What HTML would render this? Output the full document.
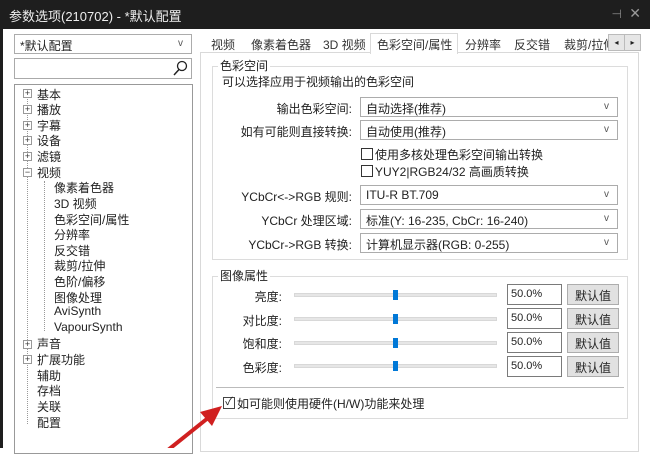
<!DOCTYPE html>
<html><head><meta charset="utf-8"><style>
*{box-sizing:border-box;margin:0;padding:0}
body{width:650px;height:448px;overflow:hidden;background:#fff;font-family:"Liberation Sans","Microsoft YaHei","Noto Sans CJK SC",sans-serif;font-size:12px;color:#222;position:relative}
.a{position:absolute;white-space:nowrap}
.title{left:0;top:0;width:650px;height:29px;background:#1e1e1e;color:#eee;font-size:13px;padding:6px 0 0 9px}
.lb{left:0;top:29px;width:3px;height:419px;background:#1e1e1e}
.dd{border:1px solid #acacac;background:#fff;height:20px;padding:2px 0 0 5px}
.dd:after{content:"v";position:absolute;right:8px;top:3px;font-size:10px;color:#555}
.box{border:1px solid #828790;background:#fff}
.tr{left:37px;font-size:12px}
.sub{left:54px}
.pm{position:absolute;width:9px;height:9px;border:1px solid #999;font-size:9px;line-height:7px;text-align:center;color:#333;background:#fff}
.tab{top:36px;font-size:12px;color:#333}
.grp{border:1px solid #dcdcdc}
.lab{text-align:right;font-size:12px}
.cb{width:12px;height:12px;border:1px solid #333;background:#fff}
.sl{height:4px;background:#e6e6e6;border:1px solid #d8d8d8;left:294px;width:203px}
.th{width:5px;height:10px;background:#0078d7;left:393px}
.ed{left:507px;width:55px;height:21px;border:1px solid #7a7a7a;padding:3px 0 0 3px;font-size:11px}
.bt{left:567px;width:52px;height:21px;border:1px solid #adadad;background:#e1e1e1;text-align:center;padding-top:2px}
</style></head><body>
<div class="a title">参数选项(210702) - *默认配置</div>
<div class="a" style="right:28px;top:7px;color:#888;font-size:12px">⊣</div>
<div class="a" style="right:9px;top:5px;color:#999;font-size:14px">✕</div>
<div class="a lb"></div>

<div class="a dd" style="left:14px;top:34px;width:178px">*默认配置</div>
<div class="a box" style="left:14px;top:58px;width:178px;height:21px;border-color:#aaa"></div>
<svg class="a" style="left:172px;top:60px" width="16" height="16"><circle cx="10" cy="6" r="4.5" fill="none" stroke="#222" stroke-width="1.3"/><line x1="7" y1="9.5" x2="2" y2="15" stroke="#222" stroke-width="1.5"/></svg>
<div class="a box" style="left:14px;top:84px;width:179px;height:370px;border-color:#999"></div>
<div class="a" style="left:27px;top:96px;height:328px;border-left:1px dotted #999"></div>
<div class="a" style="left:44px;top:181px;height:150px;border-left:1px dotted #999"></div>
<div class="pm" style="left:23px;top:89px">+</div><div class="a tr" style="top:86px">基本</div>
<div class="pm" style="left:23px;top:105px">+</div><div class="a tr" style="top:101px">播放</div>
<div class="pm" style="left:23px;top:121px">+</div><div class="a tr" style="top:117px">字幕</div>
<div class="pm" style="left:23px;top:136px">+</div><div class="a tr" style="top:132px">设备</div>
<div class="pm" style="left:23px;top:152px">+</div><div class="a tr" style="top:148px">滤镜</div>
<div class="pm" style="left:23px;top:168px">−</div><div class="a tr" style="top:164px">视频</div>
<div class="a tr sub" style="top:179px">像素着色器</div>
<div class="a tr sub" style="top:195px">3D 视频</div>
<div class="a tr sub" style="top:211px">色彩空间/属性</div>
<div class="a tr sub" style="top:226px">分辨率</div>
<div class="a tr sub" style="top:242px">反交错</div>
<div class="a tr sub" style="top:257px">裁剪/拉伸</div>
<div class="a tr sub" style="top:273px">色阶/偏移</div>
<div class="a tr sub" style="top:289px">图像处理</div>
<div class="a tr sub" style="top:304px">AviSynth</div>
<div class="a tr sub" style="top:320px">VapourSynth</div>
<div class="pm" style="left:23px;top:340px">+</div><div class="a tr" style="top:335px">声音</div>
<div class="pm" style="left:23px;top:355px">+</div><div class="a tr" style="top:351px">扩展功能</div>
<div class="a tr" style="top:367px">辅助</div>
<div class="a tr" style="top:382px">存档</div>
<div class="a tr" style="top:398px">关联</div>
<div class="a tr" style="top:414px">配置</div>

<div class="a" style="left:200px;top:52px;width:439px;height:400px;border:1px solid #d9d9d9"></div>
<div class="a" style="left:370px;top:33px;width:88px;height:21px;border:1px solid #d9d9d9;border-bottom:none;background:#fff"></div>
<div class="a tab" style="left:211px">视频</div>
<div class="a tab" style="left:251px">像素着色器</div>
<div class="a tab" style="left:323px">3D 视频</div>
<div class="a tab" style="left:377px">色彩空间/属性</div>
<div class="a tab" style="left:465px">分辨率</div>
<div class="a tab" style="left:514px">反交错</div>
<div class="a tab" style="left:564px">裁剪/拉伸</div>
<div class="a" style="left:608px;top:34px;width:17px;height:17px;background:#e6e6e6;border:1px solid #bbb;font-size:8px;text-align:center;line-height:15px">◂</div>
<div class="a" style="left:624px;top:34px;width:17px;height:17px;background:#e6e6e6;border:1px solid #bbb;font-size:8px;text-align:center;line-height:15px">▸</div>

<div class="a grp" style="left:212px;top:66px;width:416px;height:194px"></div>
<div class="a" style="left:218px;top:57px;background:#fff;padding:0 2px">色彩空间</div>
<div class="a" style="left:222px;top:73px">可以选择应用于视频输出的色彩空间</div>
<div class="a lab" style="left:220px;width:132px;top:100px">输出色彩空间:</div>
<div class="a dd" style="left:360px;top:97px;width:258px">自动选择(推荐)</div>
<div class="a lab" style="left:220px;width:132px;top:123px">如有可能则直接转换:</div>
<div class="a dd" style="left:360px;top:120px;width:258px">自动使用(推荐)</div>
<div class="a cb" style="left:361px;top:148px"></div><div class="a" style="left:375px;top:146px">使用多核处理色彩空间输出转换</div>
<div class="a cb" style="left:361px;top:165px"></div><div class="a" style="left:375px;top:163px">YUY2|RGB24/32 高画质转换</div>
<div class="a lab" style="left:220px;width:132px;top:188px">YCbCr&lt;-&gt;RGB 规则:</div>
<div class="a dd" style="left:360px;top:185px;width:258px">ITU-R BT.709</div>
<div class="a lab" style="left:220px;width:132px;top:212px">YCbCr 处理区域:</div>
<div class="a dd" style="left:360px;top:209px;width:258px">标准(Y: 16-235, CbCr: 16-240)</div>
<div class="a lab" style="left:220px;width:132px;top:236px">YCbCr-&gt;RGB 转换:</div>
<div class="a dd" style="left:360px;top:233px;width:258px">计算机显示器(RGB: 0-255)</div>

<div class="a grp" style="left:212px;top:276px;width:416px;height:143px"></div>
<div class="a" style="left:218px;top:267px;background:#fff;padding:0 2px">图像属性</div>
<div class="a grp" style="left:216px;top:387px;width:408px;height:0;border-width:1px 0 0 0;border-color:#bbb"></div>
<div class="a lab" style="left:220px;width:62px;top:288px">亮度:</div>
<div class="a lab" style="left:220px;width:62px;top:312px">对比度:</div>
<div class="a lab" style="left:220px;width:62px;top:335px">饱和度:</div>
<div class="a lab" style="left:220px;width:62px;top:359px">色彩度:</div>
<div class="a sl" style="top:293px"></div><div class="a th" style="top:290px"></div>
<div class="a sl" style="top:317px"></div><div class="a th" style="top:314px"></div>
<div class="a sl" style="top:341px"></div><div class="a th" style="top:338px"></div>
<div class="a sl" style="top:364px"></div><div class="a th" style="top:361px"></div>
<div class="a ed" style="top:284px">50.0%</div><div class="a bt" style="top:284px">默认值</div>
<div class="a ed" style="top:308px">50.0%</div><div class="a bt" style="top:308px">默认值</div>
<div class="a ed" style="top:332px">50.0%</div><div class="a bt" style="top:332px">默认值</div>
<div class="a ed" style="top:356px">50.0%</div><div class="a bt" style="top:356px">默认值</div>
<div class="a cb" style="left:223px;top:397px;border-color:#444;font-size:11px;line-height:9px;text-align:center">✓</div>
<div class="a" style="left:237px;top:395px">如可能则使用硬件(H/W)功能来处理</div>

<svg class="a" style="left:160px;top:400px" width="70" height="48"><line x1="8" y1="50" x2="48" y2="18" stroke="#d02020" stroke-width="4"/><polygon points="62,6 40,12 52,26" fill="#d02020"/></svg>
</body></html>
